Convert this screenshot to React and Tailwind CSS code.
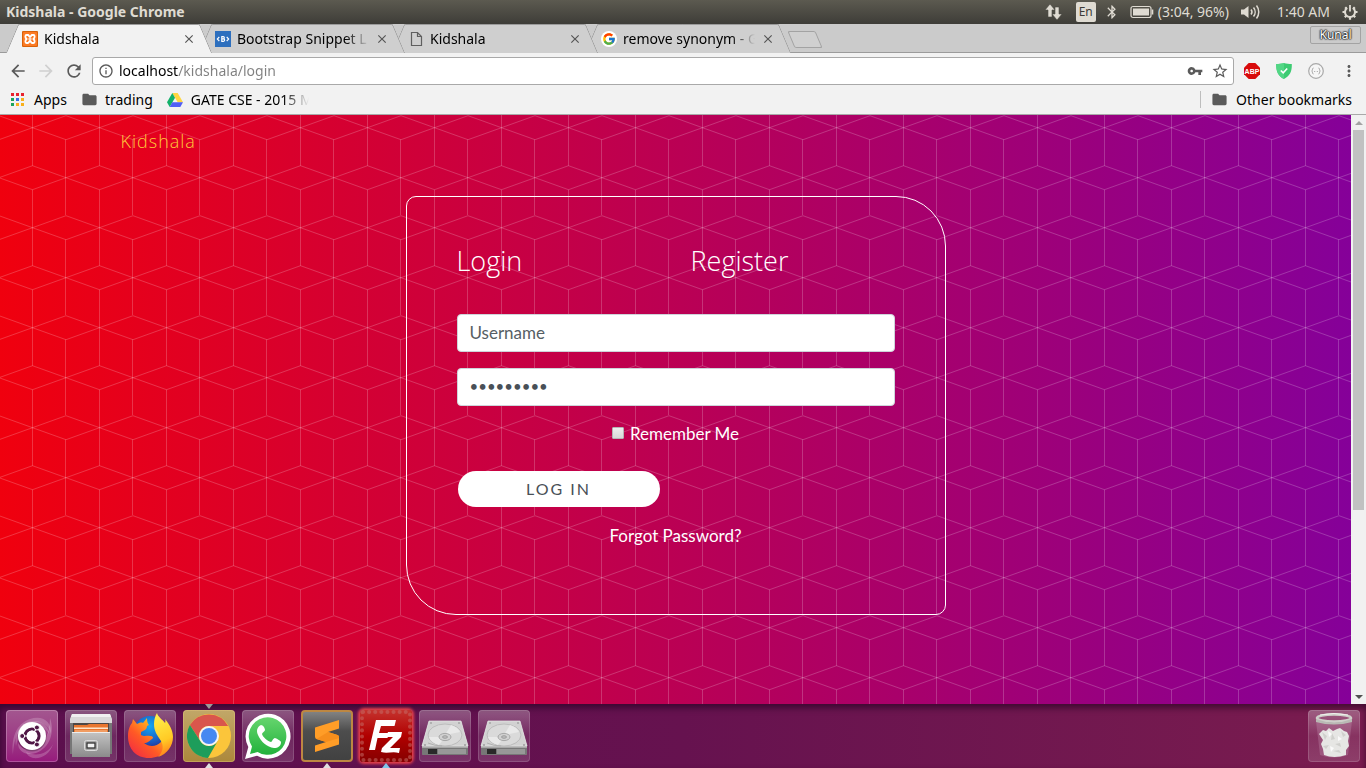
import React from "react";
import {
  MdArrowBack, MdArrowForward, MdRefresh, MdInfoOutline, MdStarBorder, MdVpnKey,
  MdMoreVert, MdFolder, MdClose, MdBluetooth, MdOutlineInsertDriveFile,
} from "react-icons/md";
import { FcGoogle } from "react-icons/fc";

/* ---------- small icons ---------- */

const Svg = ({ box, className, children }) => (
  <svg viewBox={box} className={className} aria-hidden="true" fill="none">{children}</svg>
);

const NetworkIcon = () => (
  <Svg box="0 0 17 16" className="h-4 w-[17px]">
    <path fill="#dfdbd2" d="M5 0 10 6H7v7H3V6H0zM12 16 7 10h3V3h4v7h3z" stroke="#4b4943" strokeWidth=".6" />
  </Svg>
);

const BatteryIcon = () => (
  <Svg box="0 0 24 14" className="h-[14px] w-6">
    <rect x="1" y="1.5" width="20" height="11" rx="2" stroke="#dfdbd2" strokeWidth="1.2" />
    <rect x="3" y="3.5" width="16" height="7" fill="#dfdbd2" />
    <path d="M22.5 4.5v5" stroke="#dfdbd2" strokeWidth="1.6" />
  </Svg>
);

const VolumeIcon = () => (
  <Svg box="0 0 20 16" className="h-4 w-5">
    <path fill="#dfdbd2" d="M0 5.5h3L7.5 2v12L3 10.500H0z" />
    <path d="M10 5.500a4 4 0 0 1 0 5M12.500 3.500a7 7 0 0 1 0 9M15.500 1.500a10.500 10.500 0 0 1 0 13" stroke="#dfdbd2" strokeWidth="1.500" />
  </Svg>
);

const SessionIcon = () => (
  <Svg box="0 0 16 16" className="h-4 w-4">
    <g stroke="#dfdbd2">
      <path d="M5.200 3.900a5 5 0 1 0 5.600 0" strokeWidth="2" />
      <path d="M8 1v6.500" strokeWidth="1.800" />
      <path d="M3.200 3.200 4.400 4.400M12.800 3.200 11.600 4.400M.5 8H3M13 8h2.500M2.800 13.200l1.600-1.600M13.200 13.200l-1.600-1.600M8 13v2.800" strokeWidth="2.200" />
    </g>
  </Svg>
);

const XamppIcon = () => (
  <Svg box="0 0 16 16" className="h-4 w-4">
    <rect width="16" height="16" rx="1" fill="#d9620a" />
    <rect x="1" y="1" width="14" height="14" rx="1" fill="#fb7a24" />
    <path d="M6 4H4.500C3 4 3 6.500 4.500 8 3 9.500 3 12 4.500 12H6c1 0 1-2 2-2s1 2 2 2h1.500c1.500 0 1.500-2.500 0-4 1.500-1.500 1.500-4 0-4H10C9 4 9 6 8 6S7 4 6 4z" stroke="#fff" strokeWidth="1.800" />
    <path d="M6.500 8h3" stroke="#fff" strokeWidth="1.500" />
  </Svg>
);

const SnippetIcon = () => (
  <Svg box="0 0 16 16" className="h-4 w-4">
    <rect width="16" height="16" fill="#2d6fbe" />
    <path d="M4.300 6 2.300 8l2 2M11.700 6l2 2-2 2" stroke="#fff" strokeWidth="1.100" />
    <path d="M6.800 5.500v5M6.300 5.700h1.900c1.500 0 1.500 2.200 0 2.200H6.800h1.600c1.700 0 1.700 2.400 0 2.400H6.300" stroke="#fff" strokeWidth="1.200" />
  </Svg>
);

const GoogleIcon = () => (
  <span className="flex size-4 items-center justify-center rounded-full bg-white">
    <FcGoogle className="size-[14px]" />
  </span>
);

const PageIcon = () => (
  <Svg box="0 0 16 16" className="h-4 w-4">
    <path d="M3.500 1.500h6l4 4v9h-10zM9.500 1.500v4h4" stroke="#5f5f5f" strokeWidth="1.200" />
  </Svg>
);

const appDots = [
  "#e8222e", "#e8222e", "#e8222e", "#1ba45c", "#3b6fe0", "#f8b01c", "#1ba45c", "#f8b01c", "#f8b01c",
];
const AppsIcon = () => (
  <Svg box="0 0 13 13" className="size-[13px]">
    {appDots.map((c, i) => (
      <rect key={i} x={(i % 3) * 5} y={Math.floor(i / 3) * 5} width="3" height="3" fill={c} />
    ))}
  </Svg>
);

const DriveIcon = () => (
  <Svg box="0 0 16 14" className="h-[14px] w-4">
    <path d="M5.300 0h5.400L16 9.300h-5.300z" fill="#ffd640" />
    <path d="M5.300 0 8 4.700 2.700 14 0 9.300z" fill="#11b169" />
    <path d="M5.300 9.300H16L13.300 14H2.700z" fill="#4f5df5" />
  </Svg>
);

const AdblockIcon = () => (
  <Svg box="0 0 16 16" className="size-4">
    <path d="M4.700 0h6.600L16 4.700v6.600L11.300 16H4.700L0 11.300V4.700z" fill="#d80b0b" />
    <text x="8" y="10.700" textAnchor="middle" fontSize="7" fontWeight="700" fontFamily="Liberation Sans, sans-serif" fill="#fff">ABP</text>
  </Svg>
);

const ShieldIcon = () => (
  <Svg box="0 0 16 16" className="size-4">
    <path d="M8 0c2.500.8 5 1 7.800 1 .3 7-1.800 12-7.800 15C2 13 0 8 .2 1 3 1 5.500.8 8 0z" fill="#3ccb72" />
    <path d="M8 0C5.500.8 3 1 .2 1 0 8 2 13 8 16z" fill="#52d685" />
    <path d="m4.800 7.500 2.400 2.300 4-4.300" stroke="#fff" strokeWidth="1.600" />
  </Svg>
);

const BracesIcon = () => (
  <Svg box="0 0 16 16" className="size-4">
    <circle cx="8" cy="8" r="7.300" fill="#f6f6f6" stroke="#a9a9a9" strokeWidth="1.200" />
    <path d="M5.500 5C4 5 5 7.500 3.600 8 5 8.500 4 11 5.500 11M10.500 5c1.500 0 .5 2.500 1.900 3-1.400.5-.4 3-1.900 3M6.200 8.500h1M8.800 8.500h1" stroke="#a2a2a2" />
  </Svg>
);

/* ---------- launcher icons ---------- */

const DashIcon = () => (
  <Svg box="0 0 52 52" className="size-full">
    <g fill="#fff">
      <path d="M7 45C5 28 10 14 24 9c12-4 22 2 21 15-2-8-9-13-18-12C14 14 8 26 7 45z" fillOpacity=".2" />
      <path d="M44 8c5 14 0 30-14 35-10 3-18-1-18-10 3 6 10 8 17 5 10-4 15-16 15-30z" fillOpacity=".22" />
      <path d="M10 36C8 22 16 10 30 11c8 1 13 6 13 13-4-7-10-9-17-8-9 2-14 10-16 20z" fillOpacity=".2" />
      <path d="M20 42c10 5 22 2 27-8-3 10-11 15-20 14-4-1-6-3-7-6z" fillOpacity=".2" />
    </g>
    <circle cx="26" cy="27" r="14.500" fill="#000" fillOpacity=".25" />
    <circle cx="26" cy="26" r="14" fill="#fff" />
    <circle cx="26" cy="26" r="7" stroke="#4f1645" strokeWidth="3.200" />
    <path d="M26 26 14 26M26 26l6-10.400M26 26l6 10.400" stroke="#fff" strokeWidth="1.200" />
    <circle cx="26" cy="26" r="5.400" fill="#fff" />
    {[[16.200, 26], [30.900, 17.500], [30.900, 34.500]].map(([x, y]) => (
      <circle key={`${x}-${y}`} cx={x} cy={y} r="2.500" fill="#4f1645" stroke="#fff" />
    ))}
  </Svg>
);

const FilesIcon = () => (
  <Svg box="0 0 52 52" className="size-full">
    <defs>
      <linearGradient id="cabinet" x1="0" y1="0" x2="0" y2="1">
        <stop stopColor="#c4c4c4" /><stop offset="1" stopColor="#8b8b8b" />
      </linearGradient>
    </defs>
    <path d="M5 9 7 4h38l2 5v35H5z" fill="#777" />
    <path d="M5 9 7 4h38l2 5v4H5z" fill="#d9d9d9" />
    <path d="M7 4h38l1 3H6z" fill="#f0f0f0" />
    <path d="M8 13h36v12H8z" fill="#4e4846" />
    <path d="M9 15h13l2-1h19v9H9z" fill="#e9762e" />
    <path d="M9 17.500h34v1.500H9z" fill="#fde3ca" />
    <path d="M10 20.500h32v1H10z" fill="#f9c296" />
    <path d="M7 22h38v25H7z" fill="url(#cabinet)" />
    <path d="M7 22h38v1H7z" fill="#ededed" />
    <rect x="19.500" y="30.500" width="13" height="10" rx="2" fill="#a8a8a8" stroke="#dcdcdc" />
    <rect x="22" y="33" width="8" height="5" fill="#f3f3f3" stroke="#333" strokeWidth="1.300" />
  </Svg>
);

const FirefoxIcon = () => (
  <Svg box="0 0 52 52" className="size-full">
    <defs>
      <radialGradient id="globe" cx=".5" cy=".3" r=".7">
        <stop stopColor="#12a7f2" /><stop offset=".6" stopColor="#1a62c6" /><stop offset="1" stopColor="#27288a" />
      </radialGradient>
      <linearGradient id="fox" x1="1" y1="0" x2="0" y2="1">
        <stop stopColor="#fff04a" /><stop offset=".3" stopColor="#ffb31c" /><stop offset=".6" stopColor="#ff5a25" /><stop offset="1" stopColor="#f0204a" />
      </linearGradient>
      <linearGradient id="flame" x1="0" y1="0" x2=".2" y2="1">
        <stop stopColor="#fff44f" /><stop offset=".7" stopColor="#ffca25" /><stop offset="1" stopColor="#ff8a1c" />
      </linearGradient>
    </defs>
    <circle cx="26" cy="23" r="17" fill="url(#globe)" />
    <path d="M4 26c0-6 2-11 4-13l1-4 4 5c2-1 4-2 6-1l4-5c0 4 1 6 2 7l-2 1c0 2-1 4-4 5l-2 1v3c4 2 6 0 9 1 3 0 4 2 2 3-3 2-4 4-8 4 5 4 12 4 17-1 3-4 3-9 1-14 5-3 9-3 9 8 0 13-9 22-22 22S4 39 4 26z" fill="url(#fox)" />
    <path d="M33 3c1 4 5 6 8 10 0 0 1-2 0-4 5 6 8 12 8 18 0 9-6 17-15 20 5-5 6-11 3-16-4-6-7-10-7-17 0-4 1-8 3-11z" fill="url(#flame)" />
  </Svg>
);

const ChromeIcon = () => (
  <Svg box="0 0 52 52" className="size-full">
    <circle cx="26" cy="26" r="22" fill="#fbc53b" />
    <path d="M6.900 15A22 22 0 0 1 45.100 16L26 16a10 10 0 0 0-8.700 15z" fill="#d9564c" />
    <path d="M6.900 15 17.300 31A10 10 0 0 0 34.700 31L25 48A22 22 0 0 1 6.900 15z" fill="#1d9d5b" />
    <path d="M26 16h19.100l-10.400 15z" fill="#fbc53b" />
    <circle cx="26" cy="26" r="10" fill="#f4f4f4" />
    <circle cx="26" cy="26" r="8" fill="#4688f1" />
  </Svg>
);

const WhatsAppIcon = () => (
  <Svg box="0 0 52 52" className="size-full">
    <defs>
      <linearGradient id="chat" x1="0" y1="0" x2="0" y2="1">
        <stop stopColor="#66d56e" /><stop offset="1" stopColor="#22b23c" />
      </linearGradient>
    </defs>
    <path d="M3 49 6.300 37A22.500 22.500 0 1 1 15 45.800z" fill="#fff" />
    <path d="M8 44l2-7.400A18.800 18.800 0 1 1 15.600 42z" fill="url(#chat)" />
    <path d="M19 15c-4 2-5 6-3 10 3 7 9 12 16 13 4 0 7-2 7-6 0-1-5-4-6-4-2 0-3 4-4 4-4-1-8-5-9-8 0-1 3-3 3-4 0-2-2-5-4-5z" fill="#fff" />
  </Svg>
);

const SublimeIcon = () => (
  <Svg box="0 0 52 52" className="size-full">
    <defs>
      <linearGradient id="slate" x1="0" y1="0" x2="0" y2="1">
        <stop stopColor="#858585" /><stop offset=".4" stopColor="#4d4d4d" /><stop offset="1" stopColor="#414141" />
      </linearGradient>
    </defs>
    <rect x="1" y="1" width="50" height="50" rx="3" fill="url(#slate)" stroke="#bd8742" strokeWidth="2" />
    <path d="M38 10 14 17.500v9q0 2 1.500 2.500L25 32l-11 3.500V42l24-7.500V27q0-1.500-1.500-2L27 22l11-3.500z" fill="#ff9d27" />
    <path d="M15.500 29 25 32l11.500-3.500q1.500-.5 1.500 0V27q0-1.500-1.500-2L27 22z" fill="#f68e1c" />
  </Svg>
);

const FileZillaIcon = () => (
  <Svg box="0 0 52 52" className="size-full">
    <defs>
      <linearGradient id="stamp" x1="0" y1="0" x2="0" y2="1">
        <stop stopColor="#c5332e" /><stop offset=".5" stopColor="#b10000" /><stop offset="1" stopColor="#850000" />
      </linearGradient>
    </defs>
    <rect width="52" height="52" rx="3" fill="url(#stamp)" />
    <rect x="2" y="2" width="48" height="48" rx="1" stroke="#c46a64" strokeOpacity=".55" strokeWidth="4" strokeLinecap="round" strokeDasharray="0.100 6" />
    <path d="M16 10h20l-1.500 6H21l-2 7h10l-1.500 5H17.500L15 40H9z" fill="#fff" />
    <path d="M28 22h14l-1 5-11 11h10l-1 5c-7-2-11 1-18-1l1-4 11-11h-7z" fill="#fff" />
  </Svg>
);

const DiskIcon = () => (
  <Svg box="0 0 52 52" className="size-full">
    <path d="M10 11h32l7 25v7q0 2-2 2H5q-2 0-2-2v-7z" fill="#a7a7a7" />
    <path d="M10 11h32l7 25H3z" fill="#d2d2d2" stroke="#e8e8e8" strokeWidth=".7" />
    <path d="M3 38h46v5.500q0 1.500-2 1.500H5q-2 0-2-1.500z" fill="#777" />
    <path d="M9 39h9v5H9z" fill="#292929" />
    <path d="M19 39h28v5H19z" fill="#989898" />
    <ellipse cx="26" cy="25" rx="17" ry="11" fill="#dadada" stroke="#bcbcbc" />
    <path d="M10 27a17 11 0 0 0 10 8l6-8zM41 22a17 11 0 0 0-9-7l-6 10z" fill="#e9e9e9" />
    <ellipse cx="26" cy="27" rx="6" ry="3.600" fill="#d1d1d1" stroke="#9b9b9b" strokeWidth=".8" />
    <ellipse cx="26" cy="27" rx="2.500" ry="1.300" fill="#bdbdbd" stroke="#8d8d8d" strokeWidth=".7" />
    <path d="M9 33q7 3 14 3" stroke="#b0b0b0" />
    <g fill="#777"><circle cx="6" cy="35" r=".8" /><circle cx="46" cy="35" r=".8" /><circle cx="12" cy="13" r=".7" /><circle cx="40" cy="13" r=".7" /></g>
  </Svg>
);

const TrashIcon = () => (
  <Svg box="0 0 52 52" className="size-full">
    <path d="M8 11h36l-4 34q-14 5-28 0z" fill="#e9cfe0" fillOpacity=".2" />
    <path d="m11 24 4-4 3 1 3-3 4 3 4-2 3-1 4 3 3 1 2 4-1 5 1 5-3 4v5q-12 4-22 0l-1-6-2-5 2-4z" fill="#e6e6e4" />
    <path d="m14 22 5 4-2 4zM24 23l3 6-4 1zM33 21l2 6 3-2zM15 36l6-1-3 4zM27 34l5-1 1 4zM25 41l6-1 2 3z" fill="#d0d0cd" />
    <path d="m20 21 4 3-3 3zM30 26l4 3-4 2zM22 36l4 2-3 4z" fill="#fafafa" />
    <ellipse cx="26" cy="8" rx="17" ry="3.600" stroke="#cfcfca" strokeWidth="2.600" />
    <path d="M8 9v3q18 5 36 0V9q-18 7-36 0z" fill="#b9b9b4" />
    <path d="M12 5q14-3 28 0" stroke="#f1f1ee" />
  </Svg>
);

/* ---------- system panel ---------- */

function SystemPanel() {
  return (
    <div className="flex h-6 items-center justify-between bg-linear-to-b from-[#5c5a50] to-[#3e3d38] pr-2 pl-[6px] text-sm text-[#dfdbd2]">
      <span className="font-bold">Kidshala - Google Chrome</span>
      <div className="flex items-center">
        <NetworkIcon />
        <span className="ml-[14px] flex h-5 w-5 items-center justify-center rounded-xs bg-[#dfdbd2] text-xs text-[#3c3b37]">En</span>
        <MdBluetooth className="ml-2 size-4" />
        <span className="ml-[10px]"><BatteryIcon /></span>
        <span className="ml-1">(3:04, 96%)</span>
        <span className="ml-3"><VolumeIcon /></span>
        <span className="ml-4">1:40 AM</span>
        <span className="ml-3"><SessionIcon /></span>
      </div>
    </div>
  );
}

/* ---------- browser chrome ---------- */

const tabs = [
  { title: "Kidshala", icon: <XamppIcon />, active: true, z: "z-40" },
  { title: "Bootstrap Snippet L", icon: <SnippetIcon />, z: "z-30" },
  { title: "Kidshala", icon: <PageIcon />, z: "z-20" },
  { title: "remove synonym - G", icon: <GoogleIcon />, z: "z-10" },
];

function Tab({ title, icon, active, z }) {
  const tone = active ? "bg-[#f2f2f2] border-[#9b9b9b]" : "bg-[#cfcfcf] border-[#9b9b9b]";
  return (
    <div className={`relative flex h-[29px] w-[193px] items-center pr-[9px] pl-[10px] ${z}`}>
      <span className={`absolute inset-y-0 left-0 w-1/2 -skew-x-[23deg] rounded-tl-xs border-t border-l ${tone}`} />
      <span className={`absolute inset-y-0 right-0 w-1/2 skew-x-[23deg] rounded-tr-xs border-t border-r ${tone}`} />
      <span className={`absolute inset-x-6 top-px bottom-0 ${active ? "bg-[#f2f2f2]" : "bg-[#cfcfcf]"}`} />
      <span className="relative shrink-0">{icon}</span>
      <a
        href="#tab"
        className="relative ml-[6px] min-w-0 flex-1 text-sm whitespace-nowrap text-black [mask-image:linear-gradient(to_right,#000_108px,transparent_132px)]"
      >
        {title}
      </a>
      <button type="button" aria-label="Close tab" className="relative text-[#555]">
        <MdClose className="size-[14px]" />
      </button>
    </div>
  );
}

function TabStrip() {
  return (
    <div className="flex h-[29px] items-start justify-between overflow-hidden bg-[#cbcbcb] shadow-[inset_0_-1px_0_#9b9b9b]">
      <div className="flex pl-3">
        {tabs.map((t, i) => <Tab key={i} {...t} />)}
        <button
          type="button"
          aria-label="New tab"
          className="mt-[7px] ml-[7px] h-[17px] w-7 skew-x-[23deg] rounded-xs border border-[#a3a3a3] bg-[#d0d0d0]"
        />
      </div>
      <button type="button" className="mt-[2px] mr-[5px] h-[18px] w-[51px] rounded-xs border border-[#a3a3a3] text-xs leading-4 text-white [text-shadow:0_0_1px_#222,0_0_1px_#222,0_0_1px_#222,0_0_2px_#222,0_0_2px_#222]">
        Kunal
      </button>
    </div>
  );
}

function Toolbar() {
  return (
    <div className="flex items-center bg-[#f2f2f2] py-1 pr-2 pl-2 text-[#5a5a5a]">
      <button type="button" aria-label="Back"><MdArrowBack className="size-5" /></button>
      <button type="button" aria-label="Forward" className="ml-2 text-[#d0d0d0]"><MdArrowForward className="size-5" /></button>
      <button type="button" aria-label="Reload" className="ml-2"><MdRefresh className="size-5" /></button>
      <div className="ml-2 flex h-7 flex-1 items-center rounded-[3px] border border-[#a9a9a9] bg-white pr-1 pl-[5px]">
        <MdInfoOutline className="size-4 shrink-0" />
        <input
          type="text"
          aria-label="Address"
          defaultValue="localhost/kidshala/login"
          className="ml-[5px] min-w-0 flex-1 bg-[linear-gradient(to_right,#000_59px,#808080_59px)] bg-clip-text text-sm text-transparent outline-none"
        />
        <MdVpnKey className="size-4" />
        <button type="button" aria-label="Bookmark this page" className="ml-2"><MdStarBorder className="size-[18px]" /></button>
      </div>
      <div className="ml-[10px] flex items-center gap-4">
        <button type="button" aria-label="Adblock Plus"><AdblockIcon /></button>
        <button type="button" aria-label="Shield"><ShieldIcon /></button>
        <button type="button" aria-label="Formatter"><BracesIcon /></button>
        <button type="button" aria-label="Menu"><MdMoreVert className="size-[18px]" /></button>
      </div>
    </div>
  );
}

function BookmarksBar() {
  return (
    <nav className="flex h-[26px] items-center border-b border-[#a9a9a9] bg-[#f2f2f2] pr-[14px] pb-1 pl-[11px] text-sm text-black">
      <a href="#apps" className="flex items-center gap-[10px]"><AppsIcon />Apps</a>
      <a href="#trading" className="ml-[14px] flex items-center gap-[7px]">
        <MdFolder className="size-[17px] text-[#5a5a5a]" />trading
      </a>
      <a href="#gate" className="ml-[14px] flex items-center gap-2">
        <DriveIcon />
        <span className="whitespace-nowrap [mask-image:linear-gradient(to_right,#000_92px,transparent_118px)]">GATE CSE - 2015 M</span>
      </a>
      <a href="#other" className="ml-auto flex items-center gap-2 border-l border-[#bdbdbd] pl-[10px] leading-4">
        <MdFolder className="size-[17px] text-[#5a5a5a]" />Other bookmarks
      </a>
    </nav>
  );
}

/* ---------- page ---------- */

function CubePattern() {
  return (
    <svg className="absolute inset-0 h-full w-full" aria-hidden="true">
      <defs>
        <pattern id="cubes" width="67" height="100" patternUnits="userSpaceOnUse">
          <g fill="none" stroke="#fff" strokeOpacity=".2">
            <path d="M32.500 12.700 66 .7 99.500 12.700 66 24.700z" />
            <path d="M-34.500 12.700-1 .7 32.500 12.700-1 24.700z" />
            <path d="M-1 62.700 32.500 50.700 66 62.700 32.500 74.700z" />
            <path d="M66 62.700l33.500-12M66 62.700l33.500 12" />
            <path d="M32.500 0v50.700M32.500 74.700V100M65.500 24.700V100" />
          </g>
        </pattern>
      </defs>
      <rect width="100%" height="100%" fill="url(#cubes)" />
    </svg>
  );
}

const field =
  "block h-[38px] w-full rounded-sm border border-[#ced4da] bg-white px-3 pb-[2px] text-[#495057] outline-none placeholder:text-[#565e64]";

function LoginCard() {
  return (
    <form
      onSubmit={(e) => e.preventDefault()}
      className="mx-auto w-full max-w-[540px] rounded-tl-[10px] rounded-tr-[50px] rounded-br-[10px] rounded-bl-[50px] border border-white px-[50px] pt-[46px] pb-[66px] text-white"
    >
      <div className="grid grid-cols-2 gap-[30px] font-['Open_Sans',sans-serif] text-[27px] leading-9 font-light">
        <a href="#login">Login</a>
        <a href="#register">Register</a>
      </div>
      <div className="mt-[35px] space-y-4">
        <input type="text" aria-label="Username" placeholder="Username" className={`${field} text-[17px]`} />
        <input type="password" aria-label="Password" defaultValue="passwords" className={`${field} text-[15px]`} />
      </div>
      <label className="mt-4 flex items-center justify-center gap-[6px] text-[17px] leading-6">
        <input
          type="checkbox"
          className="mb-[2px] size-3 appearance-none rounded-[1px] border border-[#b5b5b5] bg-linear-to-b from-[#eee] to-[#d8d8d8]"
        />
        Remember Me
      </label>
      <div className="mt-6 grid grid-cols-2 gap-[30px]">
        <button type="submit" className="h-[38px] rounded-[20px] border border-transparent bg-white bg-clip-padding text-base tracking-[2px] text-[#495057]">
          LOG IN
        </button>
      </div>
      <p className="mt-4 text-center text-[17px] leading-6"><a href="#forgot">Forgot Password?</a></p>
    </form>
  );
}

function PageView() {
  return (
    <div className="flex flex-1">
      <main className="relative flex-1 overflow-hidden bg-[linear-gradient(to_right,#f0000e,#850099)] font-['Lato',sans-serif]">
        <CubePattern />
        <div className="relative">
          <header className="mx-auto max-w-[1140px] px-[15px] pt-3">
            <a href="#home" className="font-['Open_Sans',sans-serif] text-lg leading-7 font-light tracking-[1px] text-[#ffc93a]">Kidshala</a>
          </header>
          <div className="pt-[41px]"><LoginCard /></div>
        </div>
      </main>
      <div className="flex w-[15px] flex-col items-center bg-[#f1f1f1]">
        <button type="button" aria-label="Scroll up" className="flex h-[15px] items-center">
          <Svg box="0 0 8 4" className="h-1 w-2"><path d="M0 4 4 0l4 4z" fill="#a3a3a3" /></Svg>
        </button>
        <div className="w-full flex-1 px-[2px]"><div className="h-[68%] bg-[#c1c1c1]" /></div>
        <button type="button" aria-label="Scroll down" className="flex h-[15px] items-center">
          <Svg box="0 0 8 4" className="h-1 w-2"><path d="M0 0l4 4 4-4z" fill="#505050" /></Svg>
        </button>
      </div>
    </div>
  );
}

/* ---------- launcher ---------- */

const plain = "bg-linear-to-b from-white/30 via-white/10 to-white/15 shadow-[inset_0_0_0_1px_rgba(255,255,255,0.15)]";
const apps = [
  { name: "Dash", icon: <DashIcon />, tile: "bg-linear-to-b from-[#a3568f] to-[#96197c] shadow-[inset_0_0_0_1px_rgba(255,255,255,0.25)]" },
  { name: "Files", icon: <FilesIcon />, tile: plain },
  { name: "Firefox", icon: <FirefoxIcon />, tile: plain },
  { name: "Chrome", icon: <ChromeIcon />, tile: "bg-linear-to-b from-[#c1a768] to-[#ac883b] shadow-[inset_0_0_0_1px_rgba(230,200,130,0.4)]", mark: "#e0e0e0", focused: true },
  { name: "WhatsApp", icon: <WhatsAppIcon />, tile: plain },
  { name: "Sublime Text", icon: <SublimeIcon />, tile: "", mark: "#e0e0e0" },
  { name: "FileZilla", icon: <FileZillaIcon />, tile: "shadow-[0_0_3px_2px_#e8404a]", mark: "#7ec8ea" },
  { name: "Disk 1", icon: <DiskIcon />, tile: plain },
  { name: "Disk 2", icon: <DiskIcon />, tile: plain },
];

function AppButton({ name, icon, tile, mark, focused }) {
  return (
    <div className="relative">
      <button type="button" aria-label={name} className={`block size-[52px] rounded-sm ${tile}`}>{icon}</button>
      {focused && (
        <Svg box="0 0 8 5" className="absolute -top-[6px] left-[22px] h-[5px] w-2"><path d="M0 0h8L4 5z" fill="#9a9a9a" /></Svg>
      )}
      {mark && (
        <Svg box="0 0 8 5" className="absolute -bottom-[6px] left-[22px] h-[5px] w-2"><path d="M4 0 8 5H0z" fill={mark} /></Svg>
      )}
    </div>
  );
}

function Launcher() {
  return (
    <div className="flex justify-between bg-linear-to-r from-[#5b0f4d] via-[#66124f] to-[#7a1c4f] p-[6px] shadow-[inset_0_4px_6px_rgba(30,0,30,0.6)]">
      <div className="flex gap-[7px]">
        {apps.map((a) => <AppButton key={a.name} {...a} />)}
      </div>
      <AppButton name="Trash" icon={<TrashIcon />} tile={plain} />
    </div>
  );
}

export default function App() {
  return (
    <div className="flex min-h-screen flex-col font-['Noto_Sans','Open_Sans',sans-serif]">
      <SystemPanel />
      <TabStrip />
      <Toolbar />
      <BookmarksBar />
      <PageView />
      <Launcher />
    </div>
  );
}
